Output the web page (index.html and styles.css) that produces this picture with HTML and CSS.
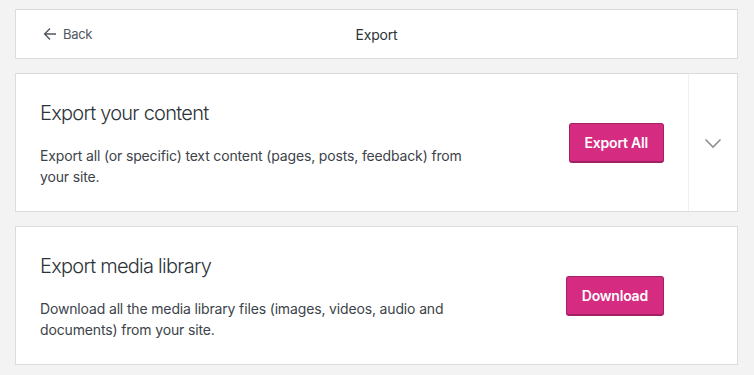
FILE: index.html
```html
<!DOCTYPE html>
<html>
<head>
<meta charset="utf-8">
<link rel="stylesheet" href="styles.css">
</head>
<body>
<div class="page">
  <header class="header-card">
    <a class="back" href="#">
      <svg width="14" height="14" viewBox="0 0 14 14" aria-hidden="true"><path d="M13 7H1.8M7 1.6L1.6 7 7 12.4" fill="none" stroke="currentColor" stroke-width="1.4"/></svg>
      <span>Back</span>
    </a>
    <div class="header-title">Export</div>
  </header>

  <section class="card">
    <div class="card-main">
      <div class="card-text">
        <h2 class="card-title">Export your content</h2>
        <p class="card-desc">Export all (or specific) text content (pages, posts, feedback) from your site.</p>
      </div>
      <button class="btn">Export All</button>
    </div>
    <div class="card-toggle">
      <svg width="24" height="24" viewBox="0 0 24 24" aria-hidden="true"><path d="M4.5 8.5l7.5 7.5 7.5-7.5" fill="none" stroke="currentColor" stroke-width="1.6"/></svg>
    </div>
  </section>

  <section class="card">
    <div class="card-main card-main-wide">
      <div class="card-text">
        <h2 class="card-title">Export media library</h2>
        <p class="card-desc">Download all the media library files (images, videos, audio and documents) from your site.</p>
      </div>
      <button class="btn">Download</button>
    </div>
  </section>
</div>
</body>
</html>
```

FILE: styles.css
```css
* { box-sizing: border-box; }
html, body { margin: 0; padding: 0; }
body {
  background: #f3f3f3;
  font-family: Inter, "Noto Sans", sans-serif;
  color: #2c3338;
}
.page {
  padding: 9px 16px 0 15px;
  display: flex;
  flex-direction: column;
  gap: 14px;
}
.header-card {
  position: relative;
  background: #fff;
  border: 1px solid #dcdcde;
  height: 50px;
  display: flex;
  align-items: center;
  padding: 0 0 0 27px;
}
.back {
  display: flex;
  align-items: center;
  gap: 6px;
  color: #50575e;
  text-decoration: none;
  font-size: 13px;
  letter-spacing: -0.3px;
}
.header-title {
  position: absolute;
  left: 0;
  right: 0;
  text-align: center;
  font-size: 14px;
  letter-spacing: -0.2px;
  color: #2c3338;
  pointer-events: none;
}
.card {
  background: #fff;
  border: 1px solid #dcdcde;
  display: flex;
  min-height: 139px;
}
.card-main {
  flex: 1;
  display: flex;
  align-items: center;
  padding: 0 24px 0 24px;
}
.card-main-wide { padding-right: 73px; }
.card-text { flex: 1; }
.card-title {
  margin: 0 0 18px;
  font-size: 20px;
  font-weight: 300;
  letter-spacing: -0.75px;
  color: #2c3338;
  line-height: 28px;
}
.card-desc {
  margin: 0;
  font-size: 14px;
  line-height: 21px;
  letter-spacing: -0.15px;
  color: #3c434a;
  max-width: 440px;
}
.btn {
  font-family: inherit;
  background: #d52c82;
  color: #fff;
  border: 1px solid #a02262;
  border-bottom-width: 2px;
  border-radius: 3px;
  font-size: 14px;
  font-weight: 600;
  letter-spacing: -0.2px;
  height: 40px;
  padding: 0 15px;
  cursor: pointer;
}
.card-toggle {
  width: 49px;
  border-left: 1px solid #f0f0f1;
  display: flex;
  align-items: center;
  justify-content: center;
  color: #8c8f94;
}
```
